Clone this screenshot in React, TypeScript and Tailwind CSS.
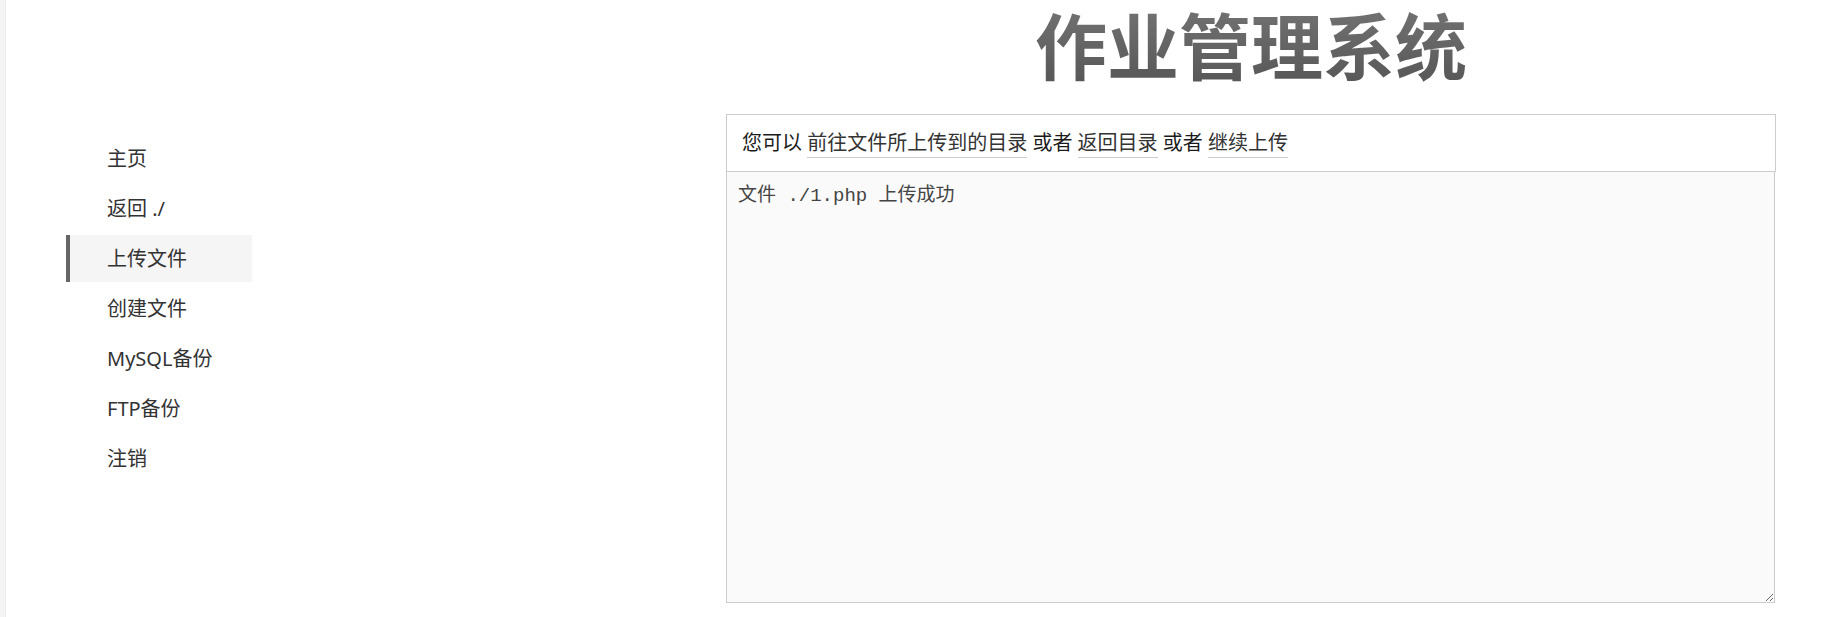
import React from 'react';

const NAV = ['主页', '返回 ./', '上传文件', '创建文件', 'MySQL备份', 'FTP备份', '注销'];

const LinkText = ({ children }: { children: React.ReactNode }) => (
  <a href="#" className="text-[#333] border-b border-[#ccc] pb-[1px]">
    {children}
  </a>
);

export default function App() {
  return (
    <div
      className="flex min-h-screen bg-white"
      style={{ fontFamily: '"Noto Sans", "Noto Sans CJK SC", sans-serif' }}
    >
      {/* left strip */}
      <div className="w-[6px] shrink-0 bg-[#f5f5f5] border-r border-[#ececec]" />

      {/* sidebar */}
      <nav className="ml-[60px] w-[186px] shrink-0 pt-[135px] flex flex-col gap-[3px]">
        {NAV.map(item => (
          <a
            key={item}
            href="#"
            className={`h-[47px] flex items-center text-[20px] text-[#333] pl-[37px] border-l-4 ${
              item === '上传文件' ? 'border-[#666] bg-[#f5f5f5]' : 'border-transparent'
            }`}
          >
            {item}
          </a>
        ))}
      </nav>

      {/* main */}
      <main className="ml-[474px] w-[1050px] shrink-0 flex flex-col">
        <h1 className="h-[114px] flex items-start justify-center pt-[2px]">
          <span className="text-[72px] leading-[88px] font-bold bg-gradient-to-b from-[#747474] to-[#555] bg-clip-text text-transparent">
            作业管理系统
          </span>
        </h1>

        <div className="border border-[#ccc] h-[58px] flex items-center pl-[15px] text-[20px] font-normal text-[#1a1a1a]">
          <span>
            您可以 <LinkText>前往文件所上传到的目录</LinkText> 或者 <LinkText>返回目录</LinkText> 或者{' '}
            <LinkText>继续上传</LinkText>
          </span>
        </div>

        <textarea
          readOnly
          defaultValue="文件 ./1.php 上传成功"
          className="mt-[-1px] w-[1049px] h-[432px] border border-[#ccc] bg-[#fafafa] text-[#444] text-[19px] leading-[26px] px-[11px] py-[11px] outline-none"
          style={{ fontFamily: '"Liberation Mono", "Noto Sans CJK SC", monospace' }}
        />
      </main>
    </div>
  );
}
